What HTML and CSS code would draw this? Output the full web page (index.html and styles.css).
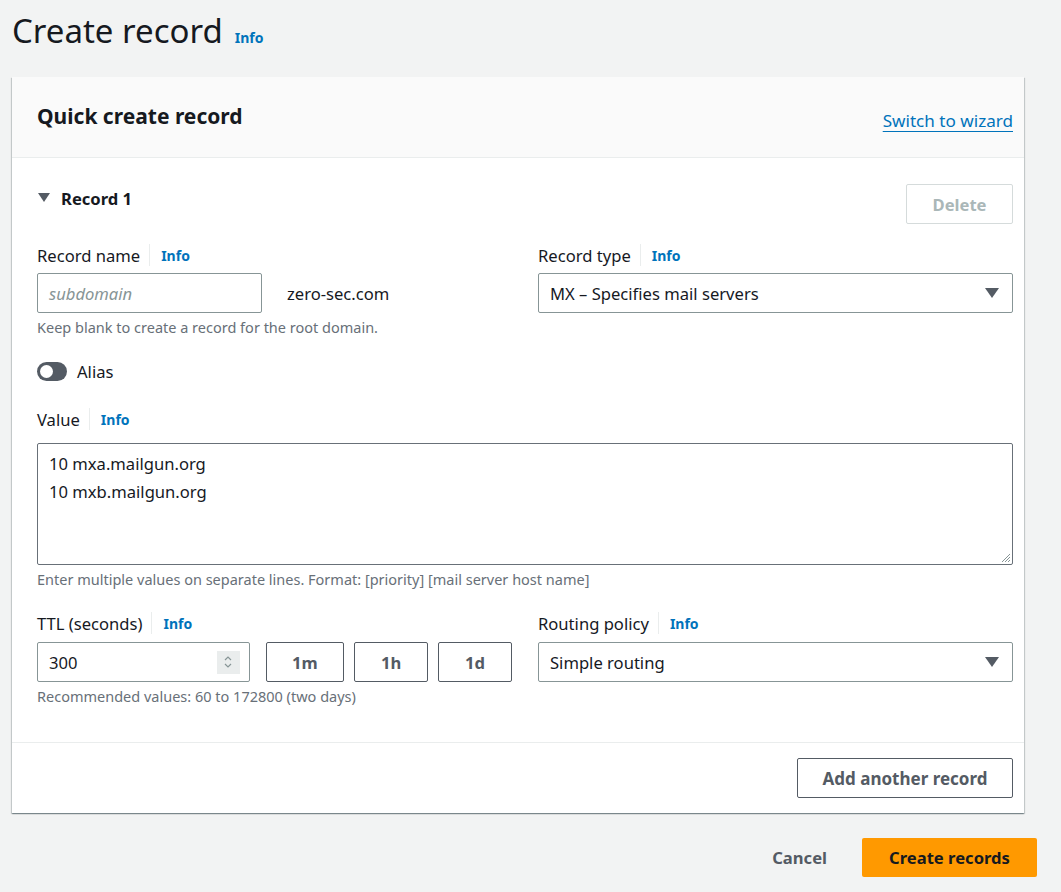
FILE: index.html
```html
<!DOCTYPE html>
<html>
<head>
<meta charset="utf-8">
<link rel="stylesheet" href="styles.css">
</head>
<body>
<div class="page">
  <div class="page-head">
    <h1 class="page-title">Create record</h1>
    <a class="info info-title">Info</a>
  </div>

  <div class="card">
    <div class="card-head">
      <h2 class="card-title">Quick create record</h2>
      <a class="wizard-link">Switch to wizard</a>
    </div>
    <div class="card-body">
      <div class="record-head">
        <div class="record-toggle">
          <svg class="caret-down" width="12" height="10" viewBox="0 0 12 10"><path d="M0 0 H12 L6 9 Z" fill="#545b64"/></svg>
          <span class="record-title">Record 1</span>
        </div>
        <button class="btn btn-disabled">Delete</button>
      </div>

      <div class="grid two">
        <div class="field">
          <div class="label-row"><span class="label">Record name</span><span class="sep"></span><a class="info">Info</a></div>
          <div class="name-row">
            <div class="input input-name"><span class="placeholder">subdomain</span></div>
            <span class="domain">zero-sec.com</span>
          </div>
          <div class="help">Keep blank to create a record for the root domain.</div>
        </div>
        <div class="field">
          <div class="label-row"><span class="label">Record type</span><span class="sep"></span><a class="info">Info</a></div>
          <div class="input select">
            <span>MX – Specifies mail servers</span>
            <svg width="14" height="10" viewBox="0 0 14 10"><path d="M0 0 H14 L7 10 Z" fill="#545b64"/></svg>
          </div>
        </div>
      </div>

      <div class="alias-row">
        <span class="toggle"><span class="knob"></span></span>
        <span class="alias-label">Alias</span>
      </div>

      <div class="field">
        <div class="label-row"><span class="label">Value</span><span class="sep"></span><a class="info">Info</a></div>
        <div class="textarea">
          <div>10 mxa.mailgun.org</div>
          <div>10 mxb.mailgun.org</div>
          <svg class="grip" width="10" height="10" viewBox="0 0 10 10"><path d="M9 1 L1 9 M9 4 L4 9 M9 7 L7 9" stroke="#879596" stroke-width="1"/></svg>
        </div>
        <div class="help">Enter multiple values on separate lines. Format: [priority] [mail server host name]</div>
      </div>

      <div class="grid two ttl-grid">
        <div class="field">
          <div class="label-row"><span class="label">TTL (seconds)</span><span class="sep"></span><a class="info">Info</a></div>
          <div class="ttl-row">
            <div class="input input-ttl">
              <span>300</span>
              <span class="spinner">
                <svg width="10" height="16" viewBox="0 0 10 16"><path d="M2 6 L5 3 L8 6 M2 10 L5 13 L8 10" fill="none" stroke="#879596" stroke-width="1.2"/></svg>
              </span>
            </div>
            <button class="btn btn-ttl b1m">1m</button>
            <button class="btn btn-ttl b1h">1h</button>
            <button class="btn btn-ttl b1d">1d</button>
          </div>
          <div class="help">Recommended values: 60 to 172800 (two days)</div>
        </div>
        <div class="field">
          <div class="label-row"><span class="label">Routing policy</span><span class="sep"></span><a class="info">Info</a></div>
          <div class="input select">
            <span>Simple routing</span>
            <svg width="14" height="10" viewBox="0 0 14 10"><path d="M0 0 H14 L7 10 Z" fill="#545b64"/></svg>
          </div>
        </div>
      </div>
    </div>
    <div class="card-foot">
      <button class="btn btn-normal">Add another record</button>
    </div>
  </div>

  <div class="actions">
    <button class="btn-link">Cancel</button>
    <button class="btn-primary">Create records</button>
  </div>
</div>
</body>
</html>
```

FILE: styles.css
```css
* { box-sizing: border-box; }
html, body { margin: 0; padding: 0; }
body {
  background: #f2f3f3;
  font-family: "Noto Sans", "Open Sans", sans-serif;
  color: #16191f;
  font-size: 16.6px;
}
.page {
  padding: 8px 24px 0 12px;
  width: 1061px;
}
.page-head {
  display: flex;
  align-items: baseline;
  height: 69px;
}
.page-title {
  margin: 0;
  font-size: 33px;
  font-weight: 400;
  line-height: 46px;
}
.info {
  color: #0073bb;
  font-weight: 700;
  font-size: 14px;
  cursor: pointer;
}
.info-title { margin-left: 12px; }

.card {
  background: #fff;
  width: 1012px;
  box-shadow: 0 1px 1px 0 rgba(0,28,36,.3), 1px 1px 1px 0 rgba(0,28,36,.15), -1px 1px 1px 0 rgba(0,28,36,.15);
}
.card-head {
  background: #fafafa;
  border-bottom: 1px solid #eaeded;
  height: 81px;
  padding: 0 11px 0 25px;
  display: flex;
  justify-content: space-between;
  align-items: center;
}
.card-title {
  margin: 0;
  font-size: 21px;
  font-weight: 700;
  position: relative;
  top: -1px;
}
.wizard-link {
  color: #0073bb;
  font-size: 17.1px;
  text-decoration: underline;
  text-underline-offset: 4px;
  position: relative;
  top: 3px;
}
.card-body {
  padding: 26px 11px 36px 25px;
}
.record-head {
  display: flex;
  justify-content: space-between;
  align-items: center;
  height: 40px;
}
.record-toggle { display: flex; align-items: center; }
.caret-down { margin-left: 1px; margin-right: 11px; position: relative; top: -6px; }
.record-title { font-weight: 700; font-size: 16.6px; position: relative; top: -6px; }

.btn {
  font-family: inherit;
  font-weight: 700;
  font-size: 16.6px;
  background: #fff;
  border: 1px solid #545b64;
  border-radius: 2px;
  color: #545b64;
  height: 40px;
  padding: 0 20px;
  cursor: pointer;
}
.btn-disabled {
  border-color: #d5dbdb;
  color: #aab7b8;
  width: 107px;
}

.grid.two {
  display: grid;
  grid-template-columns: 475px 475px;
  column-gap: 26px;
}
.record-head + .grid { margin-top: 20px; }

.label-row {
  display: flex;
  align-items: center;
  height: 22px;
  margin-bottom: 7px;
}
.sep {
  width: 1px;
  height: 22px;
  background: #eaeded;
  margin: 0 11px 0 9px;
}
.input {
  height: 40px;
  border: 1px solid #879596;
  border-radius: 2px;
  display: flex;
  align-items: center;
  padding: 0 12px 0 11px;
  background: #fff;
}
.name-row { display: flex; align-items: center; }
.input-name { width: 225px; }
.placeholder { color: #879596; font-style: italic; }
.domain { margin-left: 25px; }
.select { justify-content: space-between; padding-right: 13px; }
.help {
  color: #687078;
  font-size: 14.5px;
  line-height: 20px;
  margin-top: 4px;
}
.alias-row {
  display: flex;
  align-items: center;
  height: 24px;
  margin-top: 22px;
}
.toggle {
  width: 30px;
  height: 19px;
  border-radius: 10px;
  background: #545b64;
  position: relative;
  display: inline-block;
}
.knob {
  position: absolute;
  left: 3px;
  top: 3px;
  width: 13px;
  height: 13px;
  border-radius: 50%;
  background: #fff;
}
.alias-label { margin-left: 10px; }

.alias-row + .field { margin-top: 25px; }
.alias-row + .field .label-row { margin-bottom: 13px; }
.textarea {
  position: relative;
  height: 122px;
  border: 1px solid #687078;
  border-radius: 2px;
  padding: 6px 11px;
  line-height: 28px;
}
.grip { position: absolute; right: 1px; bottom: 1px; }

.ttl-grid { margin-top: 23px; }
.ttl-grid .label-row { margin-bottom: 8px; }
.ttl-row { display: flex; align-items: center; }
.input-ttl { width: 213px; justify-content: space-between; padding-right: 9px; }
.spinner {
  width: 23px;
  height: 23px;
  background: #eaeded;
  display: flex;
  align-items: center;
  justify-content: center;
}
.btn-ttl { padding: 0; }
.b1m { width: 79px; margin-left: 16px; }
.b1h { width: 74px; margin-left: 10px; }
.b1d { width: 74px; margin-left: 10px; }

.card-foot {
  border-top: 1px solid #eaeded;
  padding: 15px 11px 15px 25px;
  display: flex;
  justify-content: flex-end;
}
.btn-normal { width: 216px; height: 40px; font-size: 17px; }

.actions {
  display: flex;
  justify-content: flex-end;
  align-items: center;
  margin-top: 25px;
}
.btn-link {
  font-family: inherit;
  font-weight: 700;
  font-size: 16.6px;
  color: #545b64;
  background: none;
  border: none;
  margin-right: 35px;
  padding: 0;
}
.btn-primary {
  font-family: inherit;
  font-weight: 700;
  font-size: 16.6px;
  color: #16191f;
  background: #ff9900;
  border: none;
  border-radius: 2px;
  width: 175px;
  height: 39px;
}
```
